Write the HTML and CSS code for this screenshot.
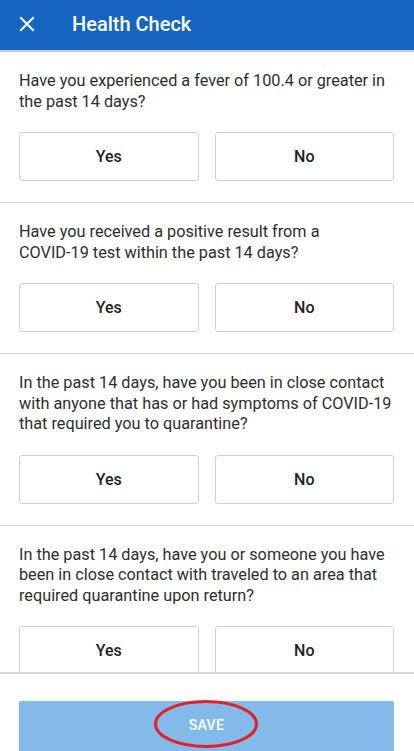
FILE: index.html
```html
<!DOCTYPE html>
<html lang="en">
<head>
<meta charset="utf-8">
<title>Health Check</title>
<link rel="stylesheet" href="styles.css">
</head>
<body>
<div class="app">
  <header class="topbar">
    <svg class="close" width="16" height="16" viewBox="0 0 16 16" aria-hidden="true">
      <path d="M2 2 L14 14 M14 2 L2 14" stroke="#fff" stroke-width="2" stroke-linecap="square" fill="none"/>
    </svg>
    <h1 class="title">Health Check</h1>
  </header>
  <main class="content">
    <section class="question">
      <p class="q-text">Have you experienced a fever of 100.4 or greater in the past 14 days?</p>
      <div class="answers"><button class="ans">Yes</button><button class="ans">No</button></div>
    </section>
    <section class="question">
      <p class="q-text">Have you received a positive result from a <span class="nowrap">COVID-19</span> test within the past 14 days?</p>
      <div class="answers"><button class="ans">Yes</button><button class="ans">No</button></div>
    </section>
    <section class="question">
      <p class="q-text">In the past 14 days, have you been in close contact with anyone that has or had symptoms of <span class="nowrap">COVID-19</span> that required you to quarantine?</p>
      <div class="answers"><button class="ans">Yes</button><button class="ans">No</button></div>
    </section>
    <section class="question">
      <p class="q-text">In the past 14 days, have you or someone you have been in close contact with traveled to an area that required quarantine upon return?</p>
      <div class="answers"><button class="ans">Yes</button><button class="ans">No</button></div>
    </section>
  </main>
  <footer class="footer">
    <div class="save-wrap">
      <button class="save">SAVE</button>
      <svg class="mark" width="106" height="50" viewBox="0 0 106 50" aria-hidden="true">
        <ellipse cx="53" cy="25" rx="50.5" ry="22.5" fill="none" stroke="#e5202a" stroke-width="3"/>
      </svg>
    </div>
  </footer>
</div>
</body>
</html>
```
FILE: styles.css
```css
* { box-sizing: border-box; }
html, body { margin: 0; padding: 0; }
body {
  font-family: Roboto, "Noto Sans", "Liberation Sans", sans-serif;
  background: #fff;
  color: #2b2b2b;
}
.app {
  width: 414px;
  height: 751px;
  display: flex;
  flex-direction: column;
  overflow: hidden;
}
.topbar {
  height: 52px;
  flex: none;
  background: #1565c0;
  border-bottom: 2px solid #c9ced3;
  display: flex;
  align-items: center;
  padding-left: 19px;
  gap: 37px;
}
.close { flex: none; margin-top: -2px; }
.title {
  margin: 0;
  font-size: 20px;
  font-weight: 500;
  color: #fff;
  margin-top: -2px;
}
.content {
  flex: 1;
  overflow: hidden;
}
.question {
  padding: 19px 19px 21px 19px;
  border-bottom: 1px solid #d3d6d9;
}
.q-text {
  margin: 0;
  max-width: 373px;
  font-size: 16.25px;
  line-height: 20.5px;
  color: #2e2e2e;
}
.nowrap { white-space: nowrap; }
.answers {
  margin-top: 20px;
  display: grid;
  grid-template-columns: 1fr 1fr;
  gap: 16px;
  padding-right: 1px;
}
.ans {
  height: 49px;
  background: #fff;
  border: 1px solid #cdd0d3;
  border-radius: 3px;
  font-family: inherit;
  font-size: 16px;
  font-weight: 500;
  color: #222;
  padding: 0;
}
.footer {
  flex: none;
  height: 79px;
  border-top: 2px solid #d6d9dc;
  padding: 27px 20px 0 19px;
}
.save-wrap {
  position: relative;
}
.save {
  display: block;
  width: 100%;
  height: 52px;
  border: none;
  border-radius: 2px;
  background: #82bbea;
  color: #fff;
  font-family: inherit;
  font-size: 14px;
  font-weight: 500;
  letter-spacing: 0.3px;
  padding: 0 0 4px 0;
}
.mark {
  position: absolute;
  left: 134px;
  top: -2px;
  pointer-events: none;
}
```
